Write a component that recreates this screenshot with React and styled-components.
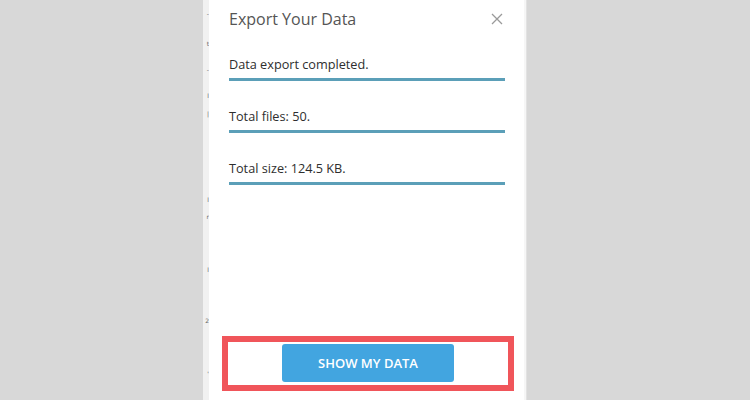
import React from "react";
import styled, { createGlobalStyle } from "styled-components";

const Global = createGlobalStyle`
  html, body { margin: 0; padding: 0; }
  body {
    background: #d8d8d8;
    font-family: "Open Sans", "Noto Sans", Arial, sans-serif;
    width: 750px;
    height: 400px;
    overflow: hidden;
  }
`;

const Stage = styled.div`
  display: flex;
  width: 750px;
  height: 400px;
  padding-left: 203px;
  box-sizing: border-box;
`;

const PageStrip = styled.div`
  width: 6px;
  height: 400px;
  background: #f1f1f1;
  display: flex;
  flex-direction: column;
  align-items: flex-end;
  padding-right: 0;
  box-sizing: border-box;
`;

const Fragment = styled.span`
  display: block;
  margin-top: ${(p) => p.$gap}px;
  font-family: "DejaVu Sans", sans-serif;
  font-size: 6px;
  line-height: 8px;
  color: #666;
`;

const Modal = styled.div`
  width: 315px;
  height: 400px;
  background: #fff;
  display: flex;
  flex-direction: column;
  box-sizing: border-box;
`;

const RightEdge = styled.div`
  width: 2px;
  height: 400px;
  background: #f6f6f6;
  border-right: 1px solid #e2e2e2;
`;

const Header = styled.div`
  display: flex;
  align-items: center;
  justify-content: space-between;
  padding: 7px 20px 0 20px;
  height: 24px;
`;

const Title = styled.h2`
  margin: 0;
  font-size: 16px;
  line-height: 24px;
  font-weight: 400;
  color: #555;
`;

const Close = styled.button`
  border: 0;
  background: none;
  padding: 0;
  margin-right: 1px;
  width: 12px;
  height: 12px;
  display: flex;
  cursor: pointer;
`;

const Content = styled.div`
  display: flex;
  flex-direction: column;
  gap: 27px;
  padding: 25px 19px 0 20px;
`;

const Row = styled.div`
  font-size: 12.7px;
  line-height: 17px;
  color: #2e2e2e;
  padding-bottom: 5px;
  border-bottom: 3px solid #5b9fb8;
`;

const Spacer = styled.div`
  flex: 1;
`;

const Highlight = styled.div`
  margin: 0 10px 9px 13px;
  border: 6px solid #f0555a;
  padding: 2px 0 3px;
  display: flex;
  justify-content: center;
`;

const PrimaryButton = styled.button`
  width: 172px;
  height: 38px;
  border: 0;
  border-radius: 3px;
  background: #42a5e0;
  color: #fff;
  font-family: "Open Sans", "Noto Sans", Arial, sans-serif;
  font-size: 13px;
  font-weight: 600;
  text-transform: uppercase;
  cursor: pointer;
`;

const fragments = [
  { gap: 10, ch: "-" },
  { gap: 22, ch: "t" },
  { gap: 18, ch: "-" },
  { gap: 18, ch: "l" },
  { gap: 10, ch: "|" },
  { gap: 78, ch: "l" },
  { gap: 9, ch: "r" },
  { gap: 45, ch: "l" },
  { gap: 43, ch: "2" },
  { gap: 45, ch: "'" },
];

export default function App() {
  return (
    <>
      <Global />
      <Stage>
        <PageStrip>
          {fragments.map((f, i) => (
            <Fragment key={i} $gap={f.gap}>{f.ch}</Fragment>
          ))}
        </PageStrip>
        <Modal>
          <Header>
            <Title>Export Your Data</Title>
            <Close aria-label="Close">
              <svg width="12" height="12" viewBox="0 0 12 12">
                <path d="M1 1 L11 11 M11 1 L1 11" stroke="#9a9a9a" strokeWidth="1.3" fill="none" />
              </svg>
            </Close>
          </Header>
          <Content>
            <Row>Data export completed.</Row>
            <Row>Total files: 50.</Row>
            <Row>Total size: 124.5 KB.</Row>
          </Content>
          <Spacer />
          <Highlight>
            <PrimaryButton>Show my data</PrimaryButton>
          </Highlight>
        </Modal>
        <RightEdge />
      </Stage>
    </>
  );
}
